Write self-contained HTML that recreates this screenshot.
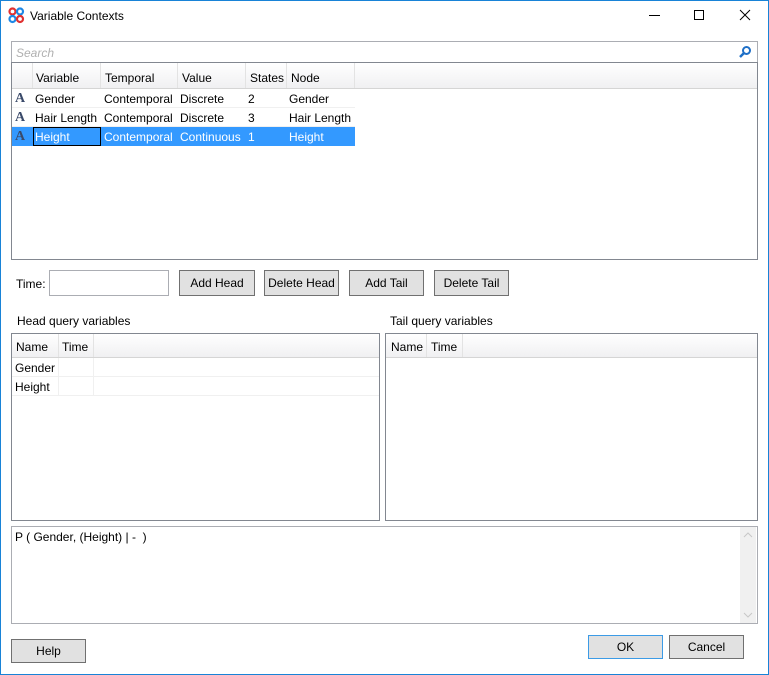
<!DOCTYPE html>
<html><head><style>
*{box-sizing:border-box;margin:0;padding:0}
body{width:769px;height:675px;position:relative;background:#fff;font-family:"Liberation Sans",sans-serif;font-size:12px;color:#000;overflow:hidden}
.a{position:absolute}
.win{left:0;top:0;width:769px;height:675px;border:1px solid #1883d7}
.btn{position:absolute;background:#e1e1e1;border:1px solid #707070;text-align:center;font-size:12px;line-height:22px}
.grid{position:absolute;border:1px solid #828790;background:#fff}
.hdr{position:absolute;left:0;right:0;top:0;background:linear-gradient(#fff,#f0f0f2);border-bottom:1px solid #d5d5d5}
.c{position:absolute;white-space:nowrap;overflow:hidden}
.hl{border-right:1px solid #e3e3e3}
.row{position:absolute;border-bottom:1px solid #f0f0f0}
</style></head><body>
<div class="a win"></div>
<svg class="a" style="left:8px;top:7px" width="17" height="17" viewBox="0 0 17 17">
<circle cx="4.5" cy="4.5" r="3" fill="none" stroke="#e03030" stroke-width="2.2"/>
<circle cx="12" cy="4.5" r="3" fill="none" stroke="#1e88e5" stroke-width="2.2"/>
<circle cx="4.5" cy="12" r="3" fill="none" stroke="#1e88e5" stroke-width="2.2"/>
<circle cx="12" cy="12" r="3" fill="none" stroke="#e03030" stroke-width="2.2"/>
</svg>
<div class="a" style="left:30px;top:9px;font-size:12px">Variable Contexts</div>
<div class="a" style="left:649px;top:15px;width:11px;height:1px;background:#000"></div>
<div class="a" style="left:694px;top:10px;width:10px;height:10px;border:1px solid #000"></div>
<svg class="a" style="left:739px;top:9px" width="12" height="12"><path d="M1 1L11 11M11 1L1 11" stroke="#000" stroke-width="1"/></svg>

<div class="a" style="left:11px;top:41px;width:747px;height:22px;border:1px solid #abadb3;border-bottom:none"></div>
<div class="a" style="left:16px;top:46px;color:#b0b0b0;font-style:italic">Search</div>
<svg class="a" style="left:738px;top:45px" width="14" height="14"><circle cx="8.5" cy="5.5" r="3.5" fill="none" stroke="#1e6fc7" stroke-width="2"/><path d="M6 8L2 12" stroke="#1e6fc7" stroke-width="2.5"/></svg>

<div class="grid" style="left:11px;top:62px;width:747px;height:198px">
<div class="hdr" style="height:26px"></div>
<div class="c hl" style="left:0;top:0;width:21px;height:25px"></div>
<div class="c hl" style="left:21px;top:0;width:68px;height:25px;padding:8px 0 0 3px">Variable</div>
<div class="c hl" style="left:89px;top:0;width:77px;height:25px;padding:8px 0 0 4px">Temporal</div>
<div class="c hl" style="left:166px;top:0;width:68px;height:25px;padding:8px 0 0 4px">Value</div>
<div class="c hl" style="left:234px;top:0;width:41px;height:25px;padding:8px 0 0 4px">States</div>
<div class="c hl" style="left:275px;top:0;width:68px;height:25px;padding:8px 0 0 4px">Node</div>
<div class="row" style="left:0;top:26px;width:343px;height:19px"></div>
<div class="row" style="left:0;top:45px;width:343px;height:19px"></div>
<div class="a" style="left:0;top:64px;width:343px;height:19px;background:#3399ff"></div>
<div class="a" style="left:21px;top:64px;width:68px;height:19px;border:1px solid #000"></div>
<div class="c" style="left:3px;top:28px;font-family:'Liberation Serif',serif;font-weight:bold;font-size:14px;color:#3a4a6a">A</div>
<div class="c" style="left:3px;top:47px;font-family:'Liberation Serif',serif;font-weight:bold;font-size:14px;color:#3a4a6a">A</div>
<div class="c" style="left:3px;top:66px;font-family:'Liberation Serif',serif;font-weight:bold;font-size:14px;color:#3a4a6a">A</div>
<div class="c" style="left:23px;top:29px">Gender</div><div class="c" style="left:92px;top:29px">Contemporal</div><div class="c" style="left:168px;top:29px">Discrete</div><div class="c" style="left:236px;top:29px">2</div><div class="c" style="left:277px;top:29px">Gender</div>
<div class="c" style="left:23px;top:48px">Hair Length</div><div class="c" style="left:92px;top:48px">Contemporal</div><div class="c" style="left:168px;top:48px">Discrete</div><div class="c" style="left:236px;top:48px">3</div><div class="c" style="left:277px;top:48px">Hair Length</div>
<div class="c" style="left:23px;top:67px;color:#fff">Height</div><div class="c" style="left:92px;top:67px;color:#fff">Contemporal</div><div class="c" style="left:168px;top:67px;color:#fff">Continuous</div><div class="c" style="left:236px;top:67px;color:#fff">1</div><div class="c" style="left:277px;top:67px;color:#fff">Height</div>
</div>

<div class="a" style="left:16px;top:277px">Time:</div>
<div class="a" style="left:49px;top:270px;width:120px;height:26px;border:1px solid #abadb3"></div>
<div class="btn" style="left:179px;top:270px;width:76px;height:26px;line-height:24px">Add Head</div>
<div class="btn" style="left:264px;top:270px;width:75px;height:26px;line-height:24px">Delete Head</div>
<div class="btn" style="left:349px;top:270px;width:75px;height:26px;line-height:24px">Add Tail</div>
<div class="btn" style="left:434px;top:270px;width:75px;height:26px;line-height:24px">Delete Tail</div>

<div class="a" style="left:17px;top:314px">Head query variables</div>
<div class="a" style="left:390px;top:314px">Tail query variables</div>

<div class="grid" style="left:11px;top:333px;width:369px;height:188px">
<div class="hdr" style="height:24px"></div>
<div class="c hl" style="left:0;top:0;width:47px;height:23px;padding:6px 0 0 4px">Name</div>
<div class="c hl" style="left:47px;top:0;width:35px;height:23px;padding:6px 0 0 3px">Time</div>
<div class="row" style="left:0;top:24px;width:367px;height:19px"></div>
<div class="row" style="left:0;top:43px;width:367px;height:19px"></div>
<div class="a" style="left:46px;top:24px;width:1px;height:38px;background:#f0f0f0"></div>
<div class="a" style="left:81px;top:24px;width:1px;height:38px;background:#f0f0f0"></div>
<div class="c" style="left:3px;top:27px">Gender</div>
<div class="c" style="left:3px;top:46px">Height</div>
</div>
<div class="grid" style="left:385px;top:333px;width:373px;height:188px">
<div class="hdr" style="height:24px"></div>
<div class="c hl" style="left:0;top:0;width:41px;height:23px;padding:6px 0 0 5px">Name</div>
<div class="c hl" style="left:41px;top:0;width:36px;height:23px;padding:6px 0 0 4px">Time</div>
</div>

<div class="a" style="left:11px;top:526px;width:747px;height:98px;border:1px solid #abadb3"></div>
<div class="a" style="left:740px;top:527px;width:16px;height:96px;background:#f0f0f0"></div>
<svg class="a" style="left:743px;top:531px" width="10" height="90"><path d="M1 6L5 2L9 6" fill="none" stroke="#c8c8c8"/><path d="M1 82L5 86L9 82" fill="none" stroke="#c8c8c8"/></svg>
<div class="a" style="left:15px;top:530px">P ( Gender, (Height) | -&nbsp; )</div>

<div class="btn" style="left:11px;top:639px;width:75px;height:24px">Help</div>
<div class="btn" style="left:588px;top:635px;width:75px;height:24px;border-color:#3c9be6">OK</div>
<div class="btn" style="left:669px;top:635px;width:75px;height:24px">Cancel</div>
</body></html>
